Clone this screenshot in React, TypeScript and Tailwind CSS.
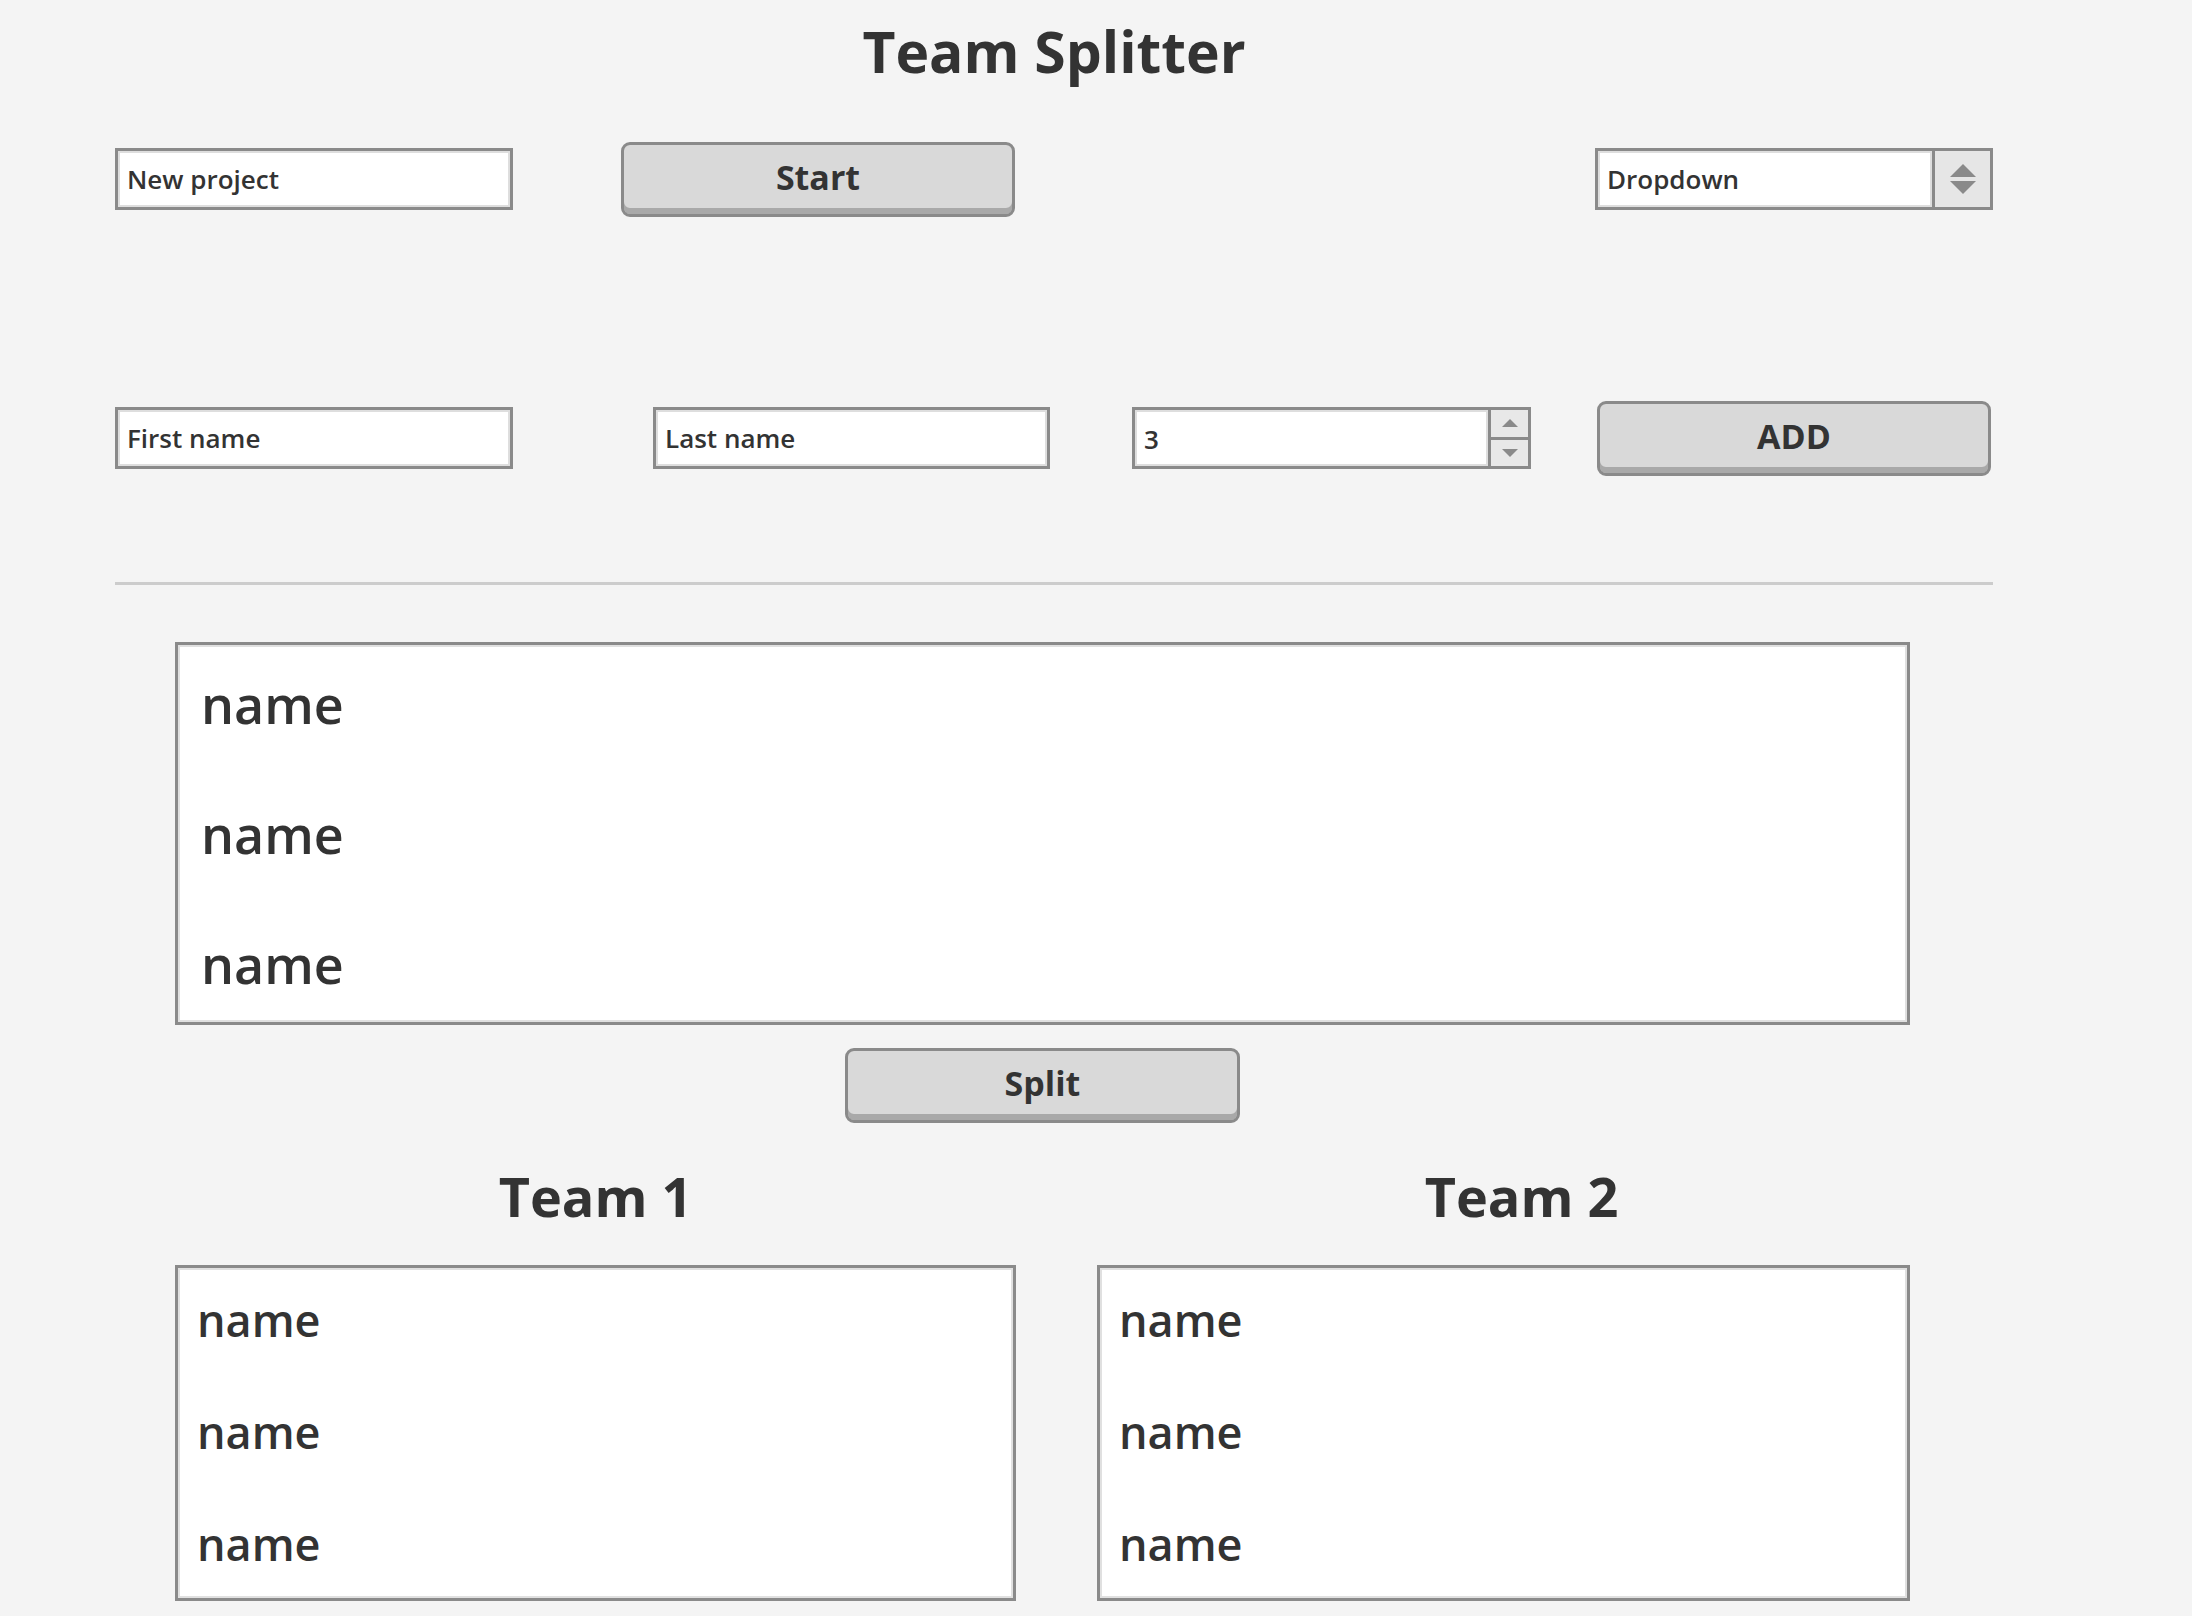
const font = { fontFamily: '"Open Sans", "Liberation Sans", sans-serif' };

function TextBox({ label, className = "" }: { label: string; className?: string }) {
  return (
    <div
      className={`h-[62px] bg-white border-[3px] border-[#8a8a8a] shadow-[inset_0_0_0_2px_#dedede] flex items-center pl-[9px] text-[26px] font-semibold text-[#333] ${className}`}>
      {label}
    </div>
  );
}

function Button({ label, className = "" }: { label: string; className?: string }) {
  return (
    <button
      className={`h-[75px] rounded-[9px] bg-[#d9d9d9] border-[3px] border-[#8a8a8a] shadow-[inset_0_-6px_0_#a9a9a9] text-[34px] font-bold text-[#333] pb-[4px] ${className}`}>
      {label}
    </button>
  );
}

function Triangle({ up, size = 10 }: { up: boolean; size?: number }) {
  return (
    <svg width={size * 2} height={size} viewBox="0 0 20 10">
      <path d={up ? "M0 10 L10 0 L20 10 Z" : "M0 0 L10 10 L20 0 Z"} fill="#8a8a8a" />
    </svg>
  );
}

function NameList({ items, rowH, size, pad, className = "" }: { items: string[]; rowH: string; size: string; pad: string; className?: string }) {
  return (
    <div className={`bg-white border-[3px] border-[#8a8a8a] shadow-[inset_0_0_0_2px_#e0e0e0] ${className}`}>
      {items.map((n, i) => (
        <div key={i} className={`${rowH} ${size} ${pad} flex items-center font-semibold text-[#333]`}>
          {n}
        </div>
      ))}
    </div>
  );
}

export default function App() {
  const names = ["name", "name", "name"];
  return (
    <div className="w-[2192px] h-[1616px] bg-[#f4f4f4] overflow-hidden" style={font}>
      <div className="w-[1878px] ml-[115px] flex flex-col">
        <h1 className="pt-[23px] h-[84px] leading-none text-center text-[57px] font-bold text-[#333]">
          Team Splitter
        </h1>

        {/* project row */}
        <div className="mt-[57px] h-[76px] flex items-center">
          <TextBox label="New project" className="w-[398px]" />
          <Button label="Start" className="ml-[108px] w-[394px]" />
          <div className="ml-auto w-[398px] h-[62px] flex border-[3px] border-[#8a8a8a] bg-white">
            <div className="flex-1 flex items-center pl-[9px] text-[26px] font-semibold text-[#333] shadow-[inset_0_0_0_2px_#dedede]">
              Dropdown
            </div>
            <div className="w-[58px] border-l-[3px] border-[#8a8a8a] bg-[#e6e6e6] flex flex-col items-center justify-center gap-[4px]">
              <Triangle up size={13} />
              <Triangle up={false} size={13} />
            </div>
          </div>
        </div>

        {/* person row */}
        <div className="mt-[184px] h-[74px] flex items-center">
          <TextBox label="First name" className="w-[398px]" />
          <TextBox label="Last name" className="ml-[140px] w-[397px]" />
          <div className="ml-[82px] w-[399px] h-[62px] flex border-[3px] border-[#8a8a8a] bg-white">
            <div className="flex-1 flex items-center pl-[9px] pt-[3px] text-[26px] font-semibold text-[#333] shadow-[inset_0_0_0_2px_#dedede]">
              3
            </div>
            <div className="w-[40px] border-l-[3px] border-[#8a8a8a] bg-[#e8e8e8] flex flex-col">
              <div className="flex-1 flex items-center justify-center border-b-[3px] border-[#8a8a8a]">
                <Triangle up size={8} />
              </div>
              <div className="flex-1 flex items-center justify-center">
                <Triangle up={false} size={8} />
              </div>
            </div>
          </div>
          <Button label="ADD" className="ml-[66px] w-[394px]" />
        </div>

        <div className="mt-[107px] h-[3px] bg-[#cccccc]" />

        <div className="ml-[60px] w-[1735px] flex flex-col items-center">
          <NameList items={names} rowH="h-[130px] pb-[13px]" size="text-[52px]" pad="pl-[23px]" className="mt-[57px] w-full h-[383px]" />
          <Button label="Split" className="mt-[23px] w-[395px]" />

          <div className="mt-[46px] w-full flex gap-[81px]">
            <div className="w-[841px] flex flex-col">
              <h2 className="h-[52px] leading-none text-center text-[54px] font-bold text-[#333]">Team 1</h2>
              <NameList items={names} rowH="h-[112px] pb-[8px]" size="text-[45px]" pad="pl-[19px]" className="mt-[44px] h-[336px]" />
            </div>
            <div className="w-[813px] flex flex-col">
              <h2 className="h-[52px] leading-none text-center pl-[36px] text-[54px] font-bold text-[#333]">Team 2</h2>
              <NameList items={names} rowH="h-[112px] pb-[8px]" size="text-[45px]" pad="pl-[19px]" className="mt-[44px] h-[336px]" />
            </div>
          </div>
        </div>
      </div>
    </div>
  );
}
